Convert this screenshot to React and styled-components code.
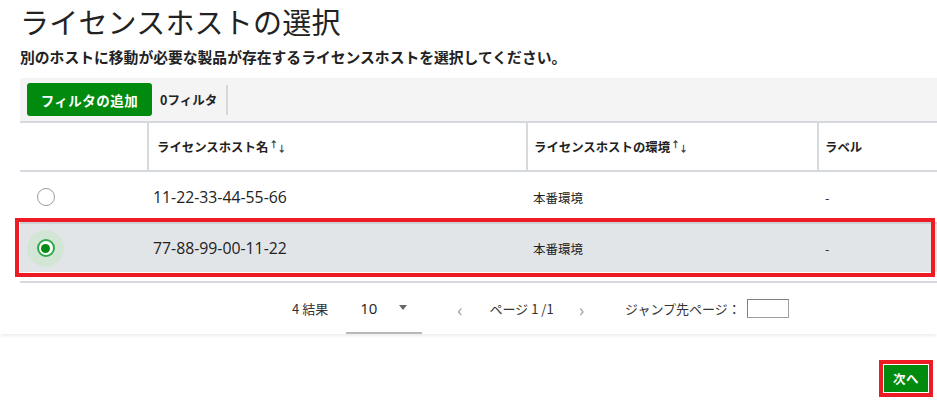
import React from "react";
import styled, { createGlobalStyle } from "styled-components";

const GlobalStyle = createGlobalStyle`
  html, body { margin: 0; padding: 0; background: #fff; }
  body {
    font-family: "Open Sans", "Noto Sans CJK JP", sans-serif;
    color: #222;
    width: 937px;
    overflow: hidden;
  }
  * { box-sizing: border-box; }
`;

const Page = styled.div`
  width: 937px;
  height: 400px;
  display: flex;
  flex-direction: column;
`;

const Main = styled.div`
  padding-left: 20px;
  display: flex;
  flex-direction: column;
`;

const Title = styled.h1`
  margin: 0;
  font-family: "Noto Sans CJK JP", sans-serif;
  font-size: 29px;
  font-weight: 400;
  line-height: 42px;
  color: #222;
  letter-spacing: 0.2px;
`;

const Subtitle = styled.p`
  margin: 5px 0 0;
  font-family: "Noto Sans CJK JP", sans-serif;
  font-size: 14.8px;
  font-weight: 700;
  line-height: 20px;
  color: #222;
`;

const Toolbar = styled.div`
  margin-top: 11px;
  height: 43px;
  background: #f4f4f4;
  display: flex;
  align-items: center;
  padding-left: 7px;
`;

const GreenButton = styled.button`
  border: none;
  background: #008a0e;
  color: #fff;
  font-family: "Noto Sans CJK JP", sans-serif;
  font-weight: 700;
  font-size: ${(p) => p.$size || "13px"};
  border-radius: ${(p) => p.$radius || "3px"};
  width: ${(p) => p.$w};
  height: ${(p) => p.$h};
  padding: 0;
  display: flex;
  align-items: center;
  justify-content: center;
  letter-spacing: 0.5px;
`;

const FilterCount = styled.span`
  font-family: "Noto Sans CJK JP", sans-serif;
  font-weight: 700;
  font-size: 12.5px;
  color: #222;
  padding: 0 9px 0 8px;
  height: 30px;
  display: flex;
  align-items: center;
  border-right: 2px solid #d8d8d8;
`;

const Grid = styled.div`
  display: grid;
  grid-template-columns: 127px 379px 291px 1fr;
`;

const HeaderRow = styled(Grid)`
  height: 51px;
  border-top: 2px solid #d6dade;
  border-bottom: 2px solid #d6dade;
`;

const HeaderCell = styled.div`
  display: flex;
  align-items: center;
  padding-left: ${(p) => p.$pad || "8px"};
  font-family: "Noto Sans CJK JP", sans-serif;
  font-weight: 700;
  font-size: 12.4px;
  color: #222;
  border-left: ${(p) => (p.$first ? "none" : "2px solid #d6dade")};
`;

const SortIcon = styled.span`
  display: inline-flex;
  margin-left: 2px;
  font-size: 9px;
  font-weight: 700;
  color: #333;
`;

const Arrow = styled.span`
  position: relative;
  top: ${(p) => (p.$down ? "2px" : "-2px")};
  margin-left: -1px;
`;

const Row = styled(Grid)`
  height: 50px;
  position: relative;
  background: ${(p) => (p.$selected ? "#e1e5e8" : "#fff")};
  border-top: ${(p) => (p.$selected ? "2px solid #cdd2d6" : "none")};
  &::after {
    content: "";
    display: ${(p) => (p.$selected ? "block" : "none")};
    position: absolute;
    left: -5px;
    right: 2px;
    top: -6px;
    bottom: -5px;
    border: 4px solid #ed1c24;
    pointer-events: none;
  }
`;

const Cell = styled.div`
  display: flex;
  align-items: center;
  padding-left: ${(p) => p.$pad || "7px"};
  font-family: ${(p) =>
    p.$latin ? `"Open Sans", "Noto Sans CJK JP", sans-serif` : `"Noto Sans CJK JP", sans-serif`};
  font-size: ${(p) => (p.$latin ? "15.8px" : "12.5px")};
  color: #222;
`;

const RadioHalo = styled.span`
  width: 37px;
  height: 37px;
  border-radius: 50%;
  background: ${(p) => (p.$checked ? "#d3e6d6" : "transparent")};
  display: flex;
  align-items: center;
  justify-content: center;
`;

const RadioRing = styled.span`
  width: 18px;
  height: 18px;
  border-radius: 50%;
  border: ${(p) => (p.$checked ? "2px solid #2fa84a" : "1.5px solid #9a9a9a")};
  background: #fff;
  display: flex;
  align-items: center;
  justify-content: center;
`;

const RadioDot = styled.span`
  width: 9px;
  height: 9px;
  border-radius: 50%;
  background: #058c17;
`;

const TableBottom = styled.div`
  height: 11px;
  border-bottom: 2px solid #d6dade;
`;

const Pagination = styled.div`
  height: 51px;
  display: flex;
  align-items: stretch;
  padding-left: 292px;
  box-shadow: 0 3px 3px -1px rgba(0, 0, 0, 0.07);
  font-family: "Noto Sans CJK JP", sans-serif;
  font-size: 12.5px;
  color: #333;
`;

const PageText = styled.span`
  display: flex;
  align-items: center;
  margin-left: ${(p) => p.$ml || "0px"};
  color: ${(p) => p.$color || "#333"};
  font-size: ${(p) => p.$size || "13px"};
`;

const Select = styled.div`
  margin-left: 18px;
  width: 76px;
  display: flex;
  align-items: center;
  padding-left: 14px;
  border-bottom: 2px solid #b8b8b8;
  font-family: "Open Sans", sans-serif;
  font-size: 15px;
  color: #222;
  gap: 22px;
`;

const Caret = styled.span`
  width: 0;
  height: 0;
  border-left: 4.5px solid transparent;
  border-right: 4.5px solid transparent;
  border-top: 5px solid #666;
`;

const JumpInput = styled.span`
  margin-left: 6px;
  align-self: center;
  width: 42px;
  height: 19px;
  border: 1px solid #a0a0a0;
  border-top-color: #808080;
  border-left-color: #808080;
  background: #fff;
`;

const Footer = styled.div`
  display: flex;
  justify-content: flex-end;
  padding: 26px 4px 0 0;
`;

const Highlight = styled.div`
  border: 4px solid #ed1c24;
  padding: 1px;
`;

const rows = [
  { id: "11-22-33-44-55-66", env: "本番環境", label: "-", selected: false },
  { id: "77-88-99-00-11-22", env: "本番環境", label: "-", selected: true },
];

function Sort() {
  return (
    <SortIcon>
      <Arrow>↑</Arrow>
      <Arrow $down>↓</Arrow>
    </SortIcon>
  );
}

export default function App() {
  return (
    <Page>
      <GlobalStyle />
      <Main>
        <Title>ライセンスホストの選択</Title>
        <Subtitle>
          別のホストに移動が必要な製品が存在するライセンスホストを選択してください。
        </Subtitle>
        <Toolbar>
          <GreenButton $w="125px" $h="33px" $size="13.5px">
            フィルタの追加
          </GreenButton>
          <FilterCount>0フィルタ</FilterCount>
        </Toolbar>
        <HeaderRow>
          <HeaderCell $first />
          <HeaderCell>
            ライセンスホスト名
            <Sort />
          </HeaderCell>
          <HeaderCell $pad="6px">
            ライセンスホストの環境
            <Sort />
          </HeaderCell>
          <HeaderCell $pad="6px">ラベル</HeaderCell>
        </HeaderRow>
        {rows.map((r) => (
          <Row key={r.id} $selected={r.selected}>
            <Cell $pad="7px">
              <RadioHalo $checked={r.selected}>
                <RadioRing $checked={r.selected}>
                  {r.selected && <RadioDot />}
                </RadioRing>
              </RadioHalo>
            </Cell>
            <Cell $latin $pad="6px">
              {r.id}
            </Cell>
            <Cell>{r.env}</Cell>
            <Cell $pad="8px">{r.label}</Cell>
          </Row>
        ))}
        <TableBottom />
      </Main>
      <Pagination>
        <PageText>4 結果</PageText>
        <Select>
          10
          <Caret />
        </Select>
        <PageText $ml="35px" $color="#9a9a9a" $size="18px">
          ‹
        </PageText>
        <PageText $ml="27px">ページ 1 /1</PageText>
        <PageText $ml="25px" $color="#9a9a9a" $size="18px">
          ›
        </PageText>
        <PageText $ml="41px">ジャンプ先ページ：</PageText>
        <JumpInput />
      </Pagination>
      <Footer>
        <Highlight>
          <GreenButton $w="44px" $h="27px" $size="12.5px" $radius="0px">
            次へ
          </GreenButton>
        </Highlight>
      </Footer>
    </Page>
  );
}
